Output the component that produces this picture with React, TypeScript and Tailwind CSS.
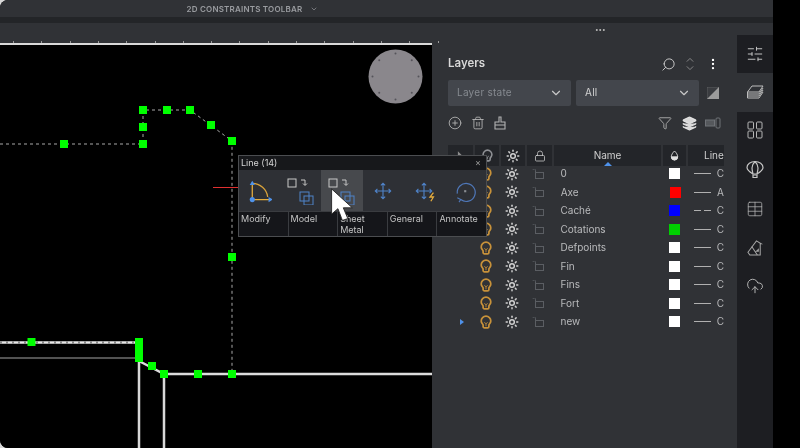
import { ChevronDown, Layers, Sun, Search, EllipsisVertical, CirclePlus, Trash2, Funnel, Lock, Table, CloudUpload, SlidersHorizontal } from 'lucide-react';

const FONT = 'font-[Inter,"Liberation_Sans",sans-serif]';

const ROWS = [
  { name: '0', color: 'bg-white', kind: 'C', dash: false },
  { name: 'Axe', color: 'bg-[#ff0000]', kind: 'A', dash: false },
  { name: 'Caché', color: 'bg-[#0000ff]', kind: 'C', dash: true },
  { name: 'Cotations', color: 'bg-[#00d000]', kind: 'C', dash: false },
  { name: 'Defpoints', color: 'bg-white', kind: 'C', dash: false },
  { name: 'Fin', color: 'bg-white', kind: 'C', dash: false },
  { name: 'Fins', color: 'bg-white', kind: 'C', dash: false },
  { name: 'Fort', color: 'bg-white', kind: 'C', dash: false },
  { name: 'new', color: 'bg-white', kind: 'C', dash: false },
];

const HANDLES = [
  [143, 110], [167, 110], [190, 110], [211, 125], [232, 141], [143, 127], [143, 144], [64, 144],
  [232, 257], [31.5, 342], [152, 366], [164, 374], [198, 374], [232, 374],
];

const TICKS = Array.from({ length: 16 }, (_, i) => 13 + i * 28.3);

function Bulb({ className }: { className?: string }) {
  return (
    <svg viewBox="0 0 14 16" fill="none" stroke="currentColor" strokeWidth="2" className={className}>
      <path d="M7 1.200a5.600 5.600 0 0 0-5.600 5.600c0 2.200 1.500 3.200 2.200 4.600v1.800a1.600 1.600 0 0 0 1.600 1.600h3.600a1.600 1.600 0 0 0 1.600-1.600v-1.800c.7-1.400 2.200-2.400 2.200-4.600A5.600 5.600 0 0 0 7 1.200Z" />
      <path d="M5 8.500 7 10l2-1.500M7 10v3" strokeWidth="1" />
    </svg>
  );
}

function OpenLock() {
  return (
    <svg viewBox="0 0 12 10" fill="none" stroke="#5b5e63" strokeWidth="1" className="h-[10px] w-[12px]">
      <rect x="3.500" y="3.500" width="8" height="6" />
      <path d="M3.500 3.500V1.800A1.300 1.300 0 0 0 .9.9" />
    </svg>
  );
}

function CadDrawing() {
  return (
    <svg viewBox="0 45 432 403" className="block h-full w-full">
      <circle cx="395.5" cy="76.5" r="27" fill="#8a878c" />
      {Array.from({ length: 8 }, (_, i) => (
        <circle
          key={i}
          cx={395.5 + 23 * Math.cos((i * Math.PI) / 4)}
          cy={76.5 + 23 * Math.sin((i * Math.PI) / 4)}
          r="1"
          fill="#55535a"
        />
      ))}
      <path d="M0 144H143V110H190L232 141V374" fill="none" stroke="#a8a8a8" strokeWidth="1" strokeDasharray="3 3" />
      <path d="M213 187.500H238" stroke="#e03030" strokeWidth="1" />
      <path d="M0 342.500H139" stroke="#e8e8e8" strokeWidth="2.500" />
      <path d="M0 342.500H139" stroke="#888" strokeWidth="2.500" strokeDasharray="2 4" />
      <path d="M0 358H135" stroke="#6e6e6e" strokeWidth="1.500" />
      <path d="M139 361L164 374H432" fill="none" stroke="#dcdcdc" strokeWidth="2.500" />
      <path d="M139 361V448M164 374V448" stroke="#d8d8d8" strokeWidth="2.500" />
      <rect x="135" y="338" width="8" height="24" fill="#00ff00" />
      {HANDLES.map(([x, y]) => (
        <rect key={`${x}-${y}`} x={x - 4} y={y - 4} width="8" height="8" fill="#00ff00" />
      ))}
    </svg>
  );
}

function IconModify() {
  return (
    <svg viewBox="0 0 28 28" fill="none" className="h-[24px] w-[24px]">
      <path d="M5 4v20h20" stroke="#e3ac3f" strokeWidth="1.500" />
      <path d="M5 5c9 0 17 7 18 16" stroke="#d9a23a" strokeWidth="1.500" />
      <path d="M2 7l3-5 3 5z" fill="#4f92ea" />
      <path d="M24 21l5 3-5 3z" fill="#4f92ea" />
      <circle cx="5" cy="24" r="3" fill="#4f92ea" />
    </svg>
  );
}

function IconCopy() {
  return (
    <svg viewBox="0 0 28 28" fill="none" className="h-7 w-7">
      <rect x="1" y="2" width="8" height="8" stroke="#c9c9c9" strokeWidth="1" />
      <path d="M14 3h4v5m-2-1.500 2 2 2-2" stroke="#c9c9c9" strokeWidth="1" />
      <rect x="13" y="15" width="9" height="9" stroke="#4f83c9" strokeWidth="1" />
      <rect x="17" y="19" width="9" height="9" stroke="#4f83c9" strokeWidth="1" />
    </svg>
  );
}

function IconMove({ spark }: { spark?: boolean }) {
  return (
    <svg viewBox="0 0 28 28" fill="none" stroke="#4f83c9" strokeWidth="1.300" className="h-[24px] w-[24px]">
      <path d="M14 5v18M5 14h18M11.500 7.500 14 5l2.500 2.500M11.500 20.500 14 23l2.500-2.500M7.500 11.500 5 14l2.500 2.500M20.500 11.500 23 14l-2.500 2.500" />
      {spark && <path d="M25 16l-4 5h4l-3 5" stroke="#e3ac3f" strokeWidth="1.500" />}
    </svg>
  );
}

function IconAnnotate() {
  return (
    <svg viewBox="0 0 28 28" fill="none" className="h-[24px] w-[24px]">
      <path d="M9 24A10.500 10.500 0 1 0 5 17" stroke="#4f77b8" strokeWidth="1.400" />
      <path d="M5 22l4 2-2 3" stroke="#4f77b8" strokeWidth="1.300" />
      <rect x="13" y="13" width="2.500" height="2.500" fill="#8a8d92" />
    </svg>
  );
}

function LinePalette() {
  const cells = [<IconModify />, <IconCopy />, <IconCopy />, <IconMove />, <IconMove spark />, <IconAnnotate />];
  const labels = ['Modify', 'Model', 'Sheet Metal', 'General', 'Annotate'];
  return (
    <div className="absolute top-[155px] left-[238px] flex h-[82px] w-[249px] flex-col border border-[#4b4d50] bg-[#17181b]">
      <div className="flex h-[14px] items-center justify-between px-[2px] text-[9px] text-[#d5d5d5]">
        <span>Line (14)</span>
        <span className="pr-[3px] text-[9px] text-[#9a9a9a]">×</span>
      </div>
      <div className="flex h-[41px] bg-[#2e3035]">
        {cells.map((icon, i) => (
          <div key={i} className={`flex flex-1 items-center justify-center ${i === 2 ? 'bg-[#47494d]' : ''}`}>
            {icon}
          </div>
        ))}
      </div>
      <div className="flex flex-1 gap-px bg-[#3a3c40] pt-px">
        {labels.map((label) => (
          <div key={label} className="flex-1 bg-[#15161a] px-[2px] pt-px text-[9px] leading-[11px] text-[#c4c4c4]">
            {label}
          </div>
        ))}
      </div>
    </div>
  );
}

function Cursor() {
  return (
    <svg viewBox="0 0 26 40" className="absolute top-[188px] left-[329px] h-[36px] w-[25px]">
      <path d="M2 1v28l7-6 5 13 6-2-5-12h10z" fill="#fff" stroke="#222" strokeWidth="1" />
    </svg>
  );
}

function Dropdown({ label, dim }: { label: string; dim?: boolean }) {
  return (
    <div className="flex h-[26px] w-[123px] items-start justify-between rounded-[2px] bg-[#43464c] pt-[5px] pr-[8px] pl-[9px]">
      <span className={`text-[10px] tracking-wide ${dim ? 'text-[#868a90]' : 'text-[#d2d2d2]'}`}>{label}</span>
      <ChevronDown className="mt-[1px] size-[14px] text-[#c8c8c8]" />
    </div>
  );
}

function LayersPanel() {
  const headCell = 'flex h-full items-center justify-center bg-[#232529]';
  return (
    <section className="flex w-[305px] shrink-0 flex-col bg-[#303236] pt-[34px] pl-[16px]">
      <header className="flex h-[14px] items-center">
        <h3 className="text-[11.500px] font-semibold text-[#d8d8d8]">Layers</h3>
        <div className="ml-[176px] flex items-center gap-[12px] text-[#d0d0d0]">
          <Search className="size-[15px] -scale-x-100" strokeWidth={1.500} />
          <svg viewBox="0 0 10 16" fill="none" stroke="#9a9a9a" strokeWidth="1" className="-ml-[2px] h-[14px] w-[8px]">
            <path d="M1 5l4-4 4 4M1 11l4 4 4-4" />
          </svg>
          <EllipsisVertical className="size-[14px] text-white" />
        </div>
      </header>
      <div className="mt-[9px] flex items-center gap-[5px]">
        <Dropdown label="Layer state" dim />
        <Dropdown label="All" />
        <svg viewBox="0 0 12 12" className="ml-[3px] size-[12px]">
          <rect width="12" height="12" fill="#3a3c40" stroke="#777" strokeWidth="0.500" />
          <path d="M12 0V12H0z" fill="#9c9c9c" />
        </svg>
      </div>
      <div className="mt-[9px] flex h-[16px] items-center text-[#b4b4b4]">
        <CirclePlus className="size-[14px]" strokeWidth={1.500} />
        <Trash2 className="ml-[9px] size-[14px]" strokeWidth={1.500} />
        <svg viewBox="0 0 12 14" fill="none" stroke="currentColor" strokeWidth="1.100" className="ml-[9px] h-[14px] w-[12px]">
          <path d="M5 1h2v5h4v3H1V6h4zM1 9v4h10V9" />
        </svg>
        <Funnel className="ml-[152px] size-[14px]" strokeWidth={1.500} />
        <Layers className="ml-[10px] size-[15px] text-[#e0e0e0]" fill="#d8d8d8" />
        <svg viewBox="0 0 16 12" fill="none" stroke="#6f7277" strokeWidth="1" className="ml-[8px] h-[12px] w-[16px]">
          <rect x="0.500" y="3" width="9" height="6" fill="#55585c" />
          <rect x="11" y="1" width="4" height="10" rx="1" />
        </svg>
      </div>
      <div className="mt-[14px] flex h-[21px] w-[276px] gap-[2px] text-[#cfcfcf]">
        <div className={`${headCell} w-[25px]`}>
          <svg viewBox="0 0 8 10" className="h-[9px] w-[7px]" fill="#8d8d8d">
            <path d="M1 0v9l2-2 2 3 1-1-2-3h3z" />
          </svg>
        </div>
        <div className={`${headCell} w-[24px]`}>
          <Bulb className="h-[13px] w-[11px] text-[#8d8f93]" />
        </div>
        <div className={`${headCell} w-[24px]`}>
          <Sun className="size-[14px]" strokeWidth={2.500} />
        </div>
        <div className={`${headCell} w-[25px]`}>
          <Lock className="size-[12px]" strokeWidth={1.500} />
        </div>
        <div className={`${headCell} relative w-[107px] text-[10px]`}>
          Name
          <span className="absolute bottom-0 h-0 w-0 border-x-[4px] border-b-[4px] border-x-transparent border-b-[#4f92ea]" />
        </div>
        <div className={`${headCell} w-[23px]`}>
          <svg viewBox="0 0 10 12" className="h-[11px] w-[9px]" fill="none" stroke="#e0e0e0" strokeWidth="1">
            <path d="M5 1C3 3 1.500 5 1.500 7.500a3.500 3.500 0 0 0 7 0C8.500 5 7 3 5 1Z" />
            <path d="M1.500 7.500h7a3.500 3.500 0 0 1-7 0Z" fill="#e0e0e0" />
          </svg>
        </div>
        <div className={`${headCell} flex-1 overflow-hidden text-[10px]`}>
          <span className="w-full pl-[16px]">Line</span>
        </div>
      </div>
      <ul className="mt-[-1.500px] w-[276px]">
        {ROWS.map((row, i) => (
          <li key={row.name} className="flex h-[18.500px] items-center text-[10px] text-[#b9babc]">
            <div className="flex w-[25px] justify-end pr-[9px]">
              {i === ROWS.length - 1 && (
                <span className="h-0 w-0 border-y-[3.500px] border-l-[4px] border-y-transparent border-l-[#4f92ea]" />
              )}
            </div>
            <div className="flex w-[26px] justify-center">
              <Bulb className="h-[14px] w-[12px] text-[#c8923a]" />
            </div>
            <div className="flex w-[26px] justify-center">
              <Sun className="size-[14px] text-[#d0d0d0]" strokeWidth={2.500} />
            </div>
            <div className="flex w-[27px] justify-center">
              <OpenLock />
            </div>
            <span className="w-[111.500px] pl-[9px]">{row.name}</span>
            <div className="flex w-[25px] justify-center">
              <span className={`size-[11px] ${row.color}`} />
            </div>
            <div className="ml-[6.500px] flex h-px w-[17px] justify-between">
              {row.dash ? (
                <>
                  <span className="h-px w-[7px] bg-[#b0b0b0]" />
                  <span className="h-px w-[7px] bg-[#b0b0b0]" />
                </>
              ) : (
                <span className="h-px w-full bg-[#b0b0b0]" />
              )}
            </div>
            <span className="ml-[6px]">{row.kind}</span>
          </li>
        ))}
      </ul>
    </section>
  );
}

function SideRail() {
  return (
    <nav className="flex w-[36px] shrink-0 flex-col bg-[#303236] pt-[12px]">
      <div className="flex h-[38px] items-center justify-center bg-[#1d1e22]">
        <SlidersHorizontal className="size-[18px] text-[#c5c5c5]" strokeWidth={1.300} />
      </div>
      <div className="flex h-[39px] items-center justify-center">
        <svg viewBox="0 0 18 16" fill="none" stroke="#bdbdbd" strokeWidth="1" className="h-[16px] w-[18px]">
          <path d="M6 1h11l-4 6H1.500z" />
          <path d="M1.500 7v2h11.500l4-6M1.500 9v2h11.500l4-6M1.500 11v2h11.500l4-6" />
        </svg>
      </div>
      <div className="flex flex-1 flex-col items-center gap-[21px] bg-[#1d1e22] pt-[9px]">
        <svg viewBox="0 0 16 18" fill="none" stroke="currentColor" className="h-[18px] w-[16px] text-[#b5b5b5]">
          <rect x="1" y="1" width="5.500" height="7" rx="1" />
          <rect x="9.500" y="1" width="5.500" height="7" rx="1" />
          <rect x="1" y="10" width="5.500" height="7" rx="1" />
          <rect x="9.500" y="10" width="5.500" height="7" rx="1" />
        </svg>
        <svg viewBox="0 0 18 18" fill="none" stroke="currentColor" className="h-[19px] w-[18px] text-[#c5c5c5]" strokeWidth="1.200">
          <path d="M9 1C4.500 1 1 3.500 1 7c0 2.500 3.500 5 6 6.500h4C13.500 12 17 9.500 17 7c0-3.500-3.500-6-8-6Z" />
          <path d="M9 1C7 3 6 5 6 7.500c0 2 .5 4 1 6M9 1c2 2 3 4 3 6.500 0 2-.5 4-1 6M7 14.500h4V17H7z" />
        </svg>
        <Table className="size-[18px] text-[#b5b5b5]" strokeWidth={1} />
        <svg viewBox="0 0 18 18" fill="none" stroke="currentColor" className="size-[17px] text-[#a5a5a5]" strokeWidth="1.100">
          <path d="M1 14 10 2l5 3-1 0v12H3z" />
          <path d="M10 13h2v-2zM5 8l6 9" />
        </svg>
        <CloudUpload className="size-[18px] text-[#b5b5b5]" strokeWidth={1.300} />
      </div>
    </nav>
  );
}

export default function App() {
  return (
    <div className={`relative h-[448px] w-[800px] overflow-hidden bg-[#d8d8d8] blur-[0.5px] ${FONT}`}>
      <div className="flex h-full overflow-hidden rounded-l-[8px] bg-black">
        <div className="flex w-[773px] shrink-0 flex-col">
          <div className="flex h-[17px] shrink-0 items-center justify-center gap-[8px] bg-[#303236] pr-[268px] text-[8px] font-semibold tracking-[0.2px] text-[#9a9ca0]">
            2D CONSTRAINTS TOOLBAR
            <ChevronDown className="size-[8px]" />
          </div>
          <div className="h-[6px] shrink-0 bg-[#232528]" />
          <div className="flex min-h-0 flex-1">
            <div className="flex w-[432px] shrink-0 flex-col">
              <div className="relative h-[20px] shrink-0 bg-[#303236]">
                {TICKS.map((x) => (
                  <span key={x} className="absolute bottom-0 h-[2px] w-px bg-[#9a9a9a]" style={{ left: x }} />
                ))}
              </div>
              <div className="h-[2px] shrink-0 bg-[#d9d9d9]" />
              <div className="min-h-0 flex-1 bg-black">
                <CadDrawing />
              </div>
            </div>
            <LayersPanel />
            <SideRail />
          </div>
        </div>
      </div>
      <span className="absolute top-[29px] left-[595px] h-[2px] w-[10px] bg-[radial-gradient(circle,#aaa_1px,transparent_1px)] bg-[length:3.500px_2px]" />
      <LinePalette />
      <Cursor />
    </div>
  );
}
